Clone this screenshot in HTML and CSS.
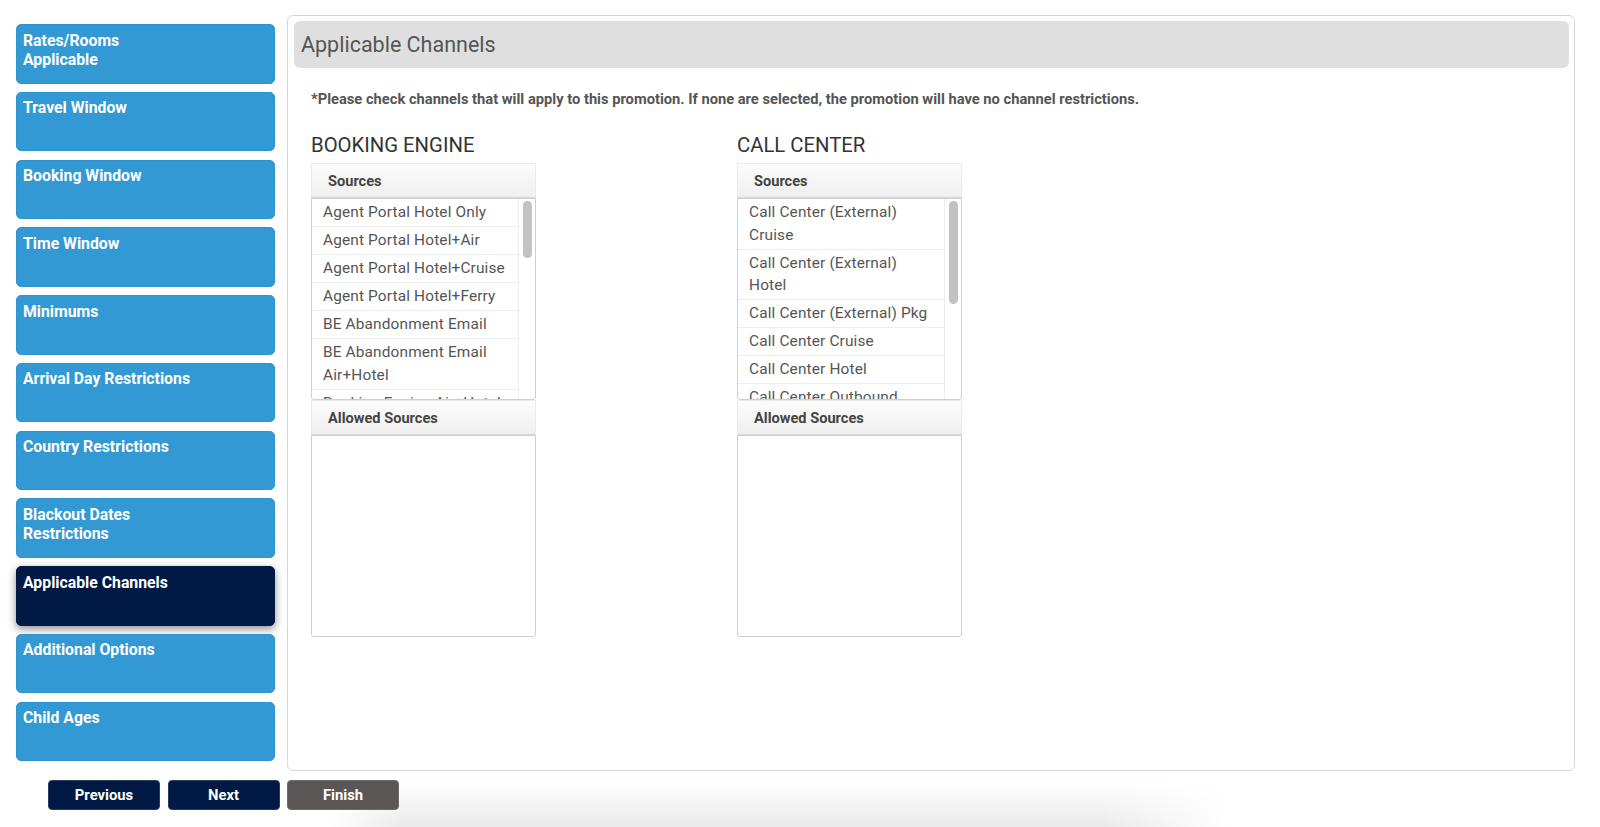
FILE: index.html
```html
<!DOCTYPE html>
<html lang="en">
<head>
    <meta charset="UTF-8">
    <meta name="viewport" content="width=device-width, initial-scale=1.0">
    <title>Promotion - Applicable Channels</title>
    <link rel="stylesheet" href="styles.css">
</head>
<body>
    <div class="page">
        <div class="wizard">
            <nav class="steps">
                <a class="step" href="#">Rates/Rooms<br>Applicable</a>
                <a class="step" href="#">Travel Window</a>
                <a class="step" href="#">Booking Window</a>
                <a class="step" href="#">Time Window</a>
                <a class="step" href="#">Minimums</a>
                <a class="step" href="#">Arrival Day Restrictions</a>
                <a class="step" href="#">Country Restrictions</a>
                <a class="step" href="#">Blackout Dates<br>Restrictions</a>
                <a class="step active" href="#">Applicable Channels</a>
                <a class="step" href="#">Additional Options</a>
                <a class="step" href="#">Child Ages</a>
            </nav>

            <section class="panel">
                <h2 class="panel-title">Applicable Channels</h2>
                <p class="note">*Please check channels that will apply to this promotion. If none are selected, the promotion will have no channel restrictions.</p>

                <div class="channels">
                    <div class="channel">
                        <h3 class="channel-name">BOOKING ENGINE</h3>
                        <div class="box-head">Sources</div>
                        <div class="list-box">
                            <ul class="source-list">
                                <li>Agent Portal Hotel Only</li>
                                <li>Agent Portal Hotel+Air</li>
                                <li>Agent Portal Hotel+Cruise</li>
                                <li>Agent Portal Hotel+Ferry</li>
                                <li>BE Abandonment Email</li>
                                <li>BE Abandonment Email Air+Hotel</li>
                                <li>Booking Engine Air+Hotel</li>
                                <li>Booking Engine Hotel Only</li>
                                <li>Booking Engine Hotel+Cruise</li>
                            </ul>
                            <div class="scroll-track"><div class="scroll-thumb" style="height: 57px"></div></div>
                        </div>
                        <div class="box-head">Allowed Sources</div>
                        <div class="list-box allowed"></div>
                    </div>

                    <div class="channel">
                        <h3 class="channel-name">CALL CENTER</h3>
                        <div class="box-head">Sources</div>
                        <div class="list-box">
                            <ul class="source-list">
                                <li>Call Center (External) Cruise</li>
                                <li>Call Center (External) Hotel</li>
                                <li>Call Center (External) Pkg</li>
                                <li>Call Center Cruise</li>
                                <li>Call Center Hotel</li>
                                <li>Call Center Outbound</li>
                                <li>Call Center Pkg</li>
                            </ul>
                            <div class="scroll-track"><div class="scroll-thumb" style="height: 103px"></div></div>
                        </div>
                        <div class="box-head">Allowed Sources</div>
                        <div class="list-box allowed"></div>
                    </div>
                </div>
            </section>
        </div>

        <div class="actions">
            <button class="btn">Previous</button>
            <button class="btn">Next</button>
            <button class="btn finish">Finish</button>
        </div>
    </div>
    <div class="footer-fade"></div>
</body>
</html>
```

FILE: styles.css
```css
html, body {
    margin: 0;
    padding: 0;
    background: #fff;
    font-family: Roboto, "Liberation Sans", Arial, sans-serif;
    overflow: hidden;
}
.page {
    position: relative;
    z-index: 1;
    padding: 15px 0 0 16px;
}
.wizard {
    display: flex;
    align-items: flex-start;
    gap: 12px;
}

/* left step menu */
.steps {
    display: flex;
    flex-direction: column;
    gap: 8.25px;
    width: 259px;
    padding-top: 9px;
}
.step {
    display: block;
    box-sizing: border-box;
    height: 59.5px;
    padding: 5.5px 6px;
    background: #3399d4;
    border: 1px solid #2f93cd;
    border-radius: 5px;
    color: #fff;
    font-size: 15.8px;
    font-weight: 700;
    line-height: 19px;
    text-decoration: none;
}
.step.active {
    background: #001a45;
    border-color: #001a45;
    box-shadow: 0 3px 9px rgba(0, 0, 0, 0.45);
}

/* main panel */
.panel {
    box-sizing: border-box;
    width: 1288px;
    height: 756px;
    padding: 5px 5px 0 6px;
    background: #fff;
    border: 1px solid #d6d6d6;
    border-radius: 6px;
}
.panel-title {
    margin: 0;
    height: 47px;
    padding: 0 7px;
    background: #dfdfdf;
    border-radius: 6px;
    color: #555;
    font-size: 21.5px;
    font-weight: 400;
    line-height: 47px;
}
.note {
    margin: 22px 0 0 17px;
    color: #555;
    font-size: 14.7px;
    font-weight: 700;
    line-height: 18px;
}
.channels {
    display: flex;
    padding-left: 17px;
    margin-top: 25px;
}
.channel {
    width: 426px;
}
.channel-name {
    margin: 0 0 6px;
    color: #333;
    font-size: 20.3px;
    font-weight: 400;
    line-height: 24px;
}
.box-head {
    box-sizing: border-box;
    width: 225px;
    height: 35px;
    padding: 0 16px;
    background: linear-gradient(#fcfcfc, #efefef);
    border: 1px solid #ebebeb;
    border-bottom-color: #d6d6d6;
    color: #444;
    font-size: 14.6px;
    font-weight: 700;
    line-height: 34px;
}
.list-box {
    display: flex;
    box-sizing: border-box;
    width: 225px;
    height: 202px;
    overflow: hidden;
    background: #fff;
    border: 1px solid #cfcfcf;
    border-radius: 0 0 3px 3px;
}
.list-box.allowed {
    height: 202px;
}
.source-list {
    flex: 1;
    margin: 0;
    padding: 0;
    list-style: none;
    overflow: hidden;
}
.source-list li {
    padding: 2.25px 6px 2.25px 11px;
    border-bottom: 1px solid #ececec;
    color: #555;
    font-size: 15.4px;
    line-height: 22.5px;
    letter-spacing: 0.15px;
}

.scroll-track {
    box-sizing: border-box;
    width: 17px;
    padding: 2px 0 0 4px;
    border-left: 1px solid #ececec;
}
.scroll-thumb {
    width: 9px;
    background: #c2c2c2;
    border-radius: 5px;
}

/* wizard buttons */
.actions {
    display: flex;
    gap: 7.5px;
    margin: 9px 0 0 32px;
}
.btn {
    width: 112px;
    height: 30px;
    padding: 0;
    background: #001a45;
    border: 1px solid #2a3a60;
    border-radius: 4px;
    color: #fff;
    font-family: Roboto, "Liberation Sans", Arial, sans-serif;
    font-size: 14.8px;
    font-weight: 700;
    cursor: pointer;
}
.btn.finish {
    background: #5a5656;
    border-color: #6e6a6a;
}

/* faded footer peeking in at the bottom */
.footer-fade {
    position: absolute;
    left: 330px;
    top: 772px;
    width: 900px;
    height: 55px;
    background: linear-gradient(#fff 15%, #eaeaea);
    -webkit-mask-image: linear-gradient(to right, transparent, #000 8%, #000 86%, transparent);
    z-index: 0;
}
```
